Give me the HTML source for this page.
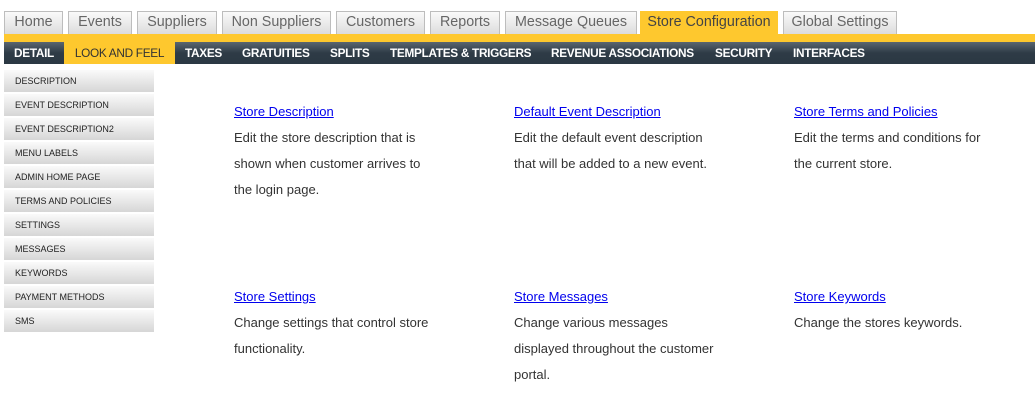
<!DOCTYPE html>
<html><head><style>
body{margin:0;width:1035px;height:413px;background:#fff;font-family:"Liberation Sans",Arial,sans-serif;position:relative;overflow:hidden}
.tab{position:absolute;top:11px;height:23px;box-sizing:border-box;border:1px solid #bdbdbd;border-bottom:none;background:linear-gradient(#fafafa,#dcdcdc);color:#666;font-size:14.3px;line-height:21px;text-align:center}
.tab.on{background:#fec82e;border-color:#fec82e;color:#444}
.ybar{position:absolute;left:4px;right:0;top:34px;height:8px;background:#fec82e}
.dbar{position:absolute;left:4px;right:0;top:42px;height:22px;background:linear-gradient(#5a6670,#2e3b46 50%,#2b3843)}
.sub{position:absolute;top:42px;height:22px;line-height:22px;color:#fff;font-size:11.8px;font-weight:bold;letter-spacing:-0.3px}
.sub.on{background:#fec82e;color:#333;font-weight:normal}
.side{position:absolute;left:4px;width:150px;height:22px;background:linear-gradient(#fafafa,#d6d6d6);font-size:9px;line-height:22px;color:#222;box-sizing:border-box;padding-left:11px}
.col{position:absolute;width:200px;font-size:13px;color:#333;line-height:26px}
.col a{color:#00e;text-decoration:underline;display:block;line-height:26px}
</style></head><body>
<div class="tab" style="left:4px;width:59px">Home</div>
<div class="tab" style="left:68px;width:64px">Events</div>
<div class="tab" style="left:137px;width:80px">Suppliers</div>
<div class="tab" style="left:222px;width:109px">Non Suppliers</div>
<div class="tab" style="left:336px;width:89px">Customers</div>
<div class="tab" style="left:430px;width:70px">Reports</div>
<div class="tab" style="left:505px;width:132px">Message Queues</div>
<div class="tab on" style="left:640px;width:138px">Store Configuration</div>
<div class="tab" style="left:783px;width:114px">Global Settings</div>
<div class="ybar"></div><div class="dbar"></div>
<div class="sub" style="left:4px;width:60px;text-align:center">DETAIL</div>
<div class="sub on" style="left:64px;width:111px;text-align:center">LOOK AND FEEL</div>
<div class="sub" style="left:185px">TAXES</div>
<div class="sub" style="left:242px">GRATUITIES</div>
<div class="sub" style="left:330px">SPLITS</div>
<div class="sub" style="left:390px">TEMPLATES &amp; TRIGGERS</div>
<div class="sub" style="left:551px">REVENUE ASSOCIATIONS</div>
<div class="sub" style="left:715px">SECURITY</div>
<div class="sub" style="left:793px">INTERFACES</div>
<div class="side" style="top:70px">DESCRIPTION</div>
<div class="side" style="top:94px">EVENT DESCRIPTION</div>
<div class="side" style="top:118px">EVENT DESCRIPTION2</div>
<div class="side" style="top:142px">MENU LABELS</div>
<div class="side" style="top:166px">ADMIN HOME PAGE</div>
<div class="side" style="top:190px">TERMS AND POLICIES</div>
<div class="side" style="top:214px">SETTINGS</div>
<div class="side" style="top:238px">MESSAGES</div>
<div class="side" style="top:262px">KEYWORDS</div>
<div class="side" style="top:286px">PAYMENT METHODS</div>
<div class="side" style="top:310px">SMS</div>
<div class="col" style="left:234px;top:99px"><a>Store Description</a>Edit the store description that is shown when customer arrives to the login page.</div>
<div class="col" style="left:514px;top:99px"><a>Default Event Description</a>Edit the default event description that will be added to a new event.</div>
<div class="col" style="left:794px;top:99px"><a>Store Terms and Policies</a>Edit the terms and conditions for the current store.</div>
<div class="col" style="left:234px;top:284px"><a>Store Settings</a>Change settings that control store functionality.</div>
<div class="col" style="left:514px;top:284px"><a>Store Messages</a>Change various messages displayed throughout the customer portal.</div>
<div class="col" style="left:794px;top:284px"><a>Store Keywords</a>Change the stores keywords.</div>
</body></html>
